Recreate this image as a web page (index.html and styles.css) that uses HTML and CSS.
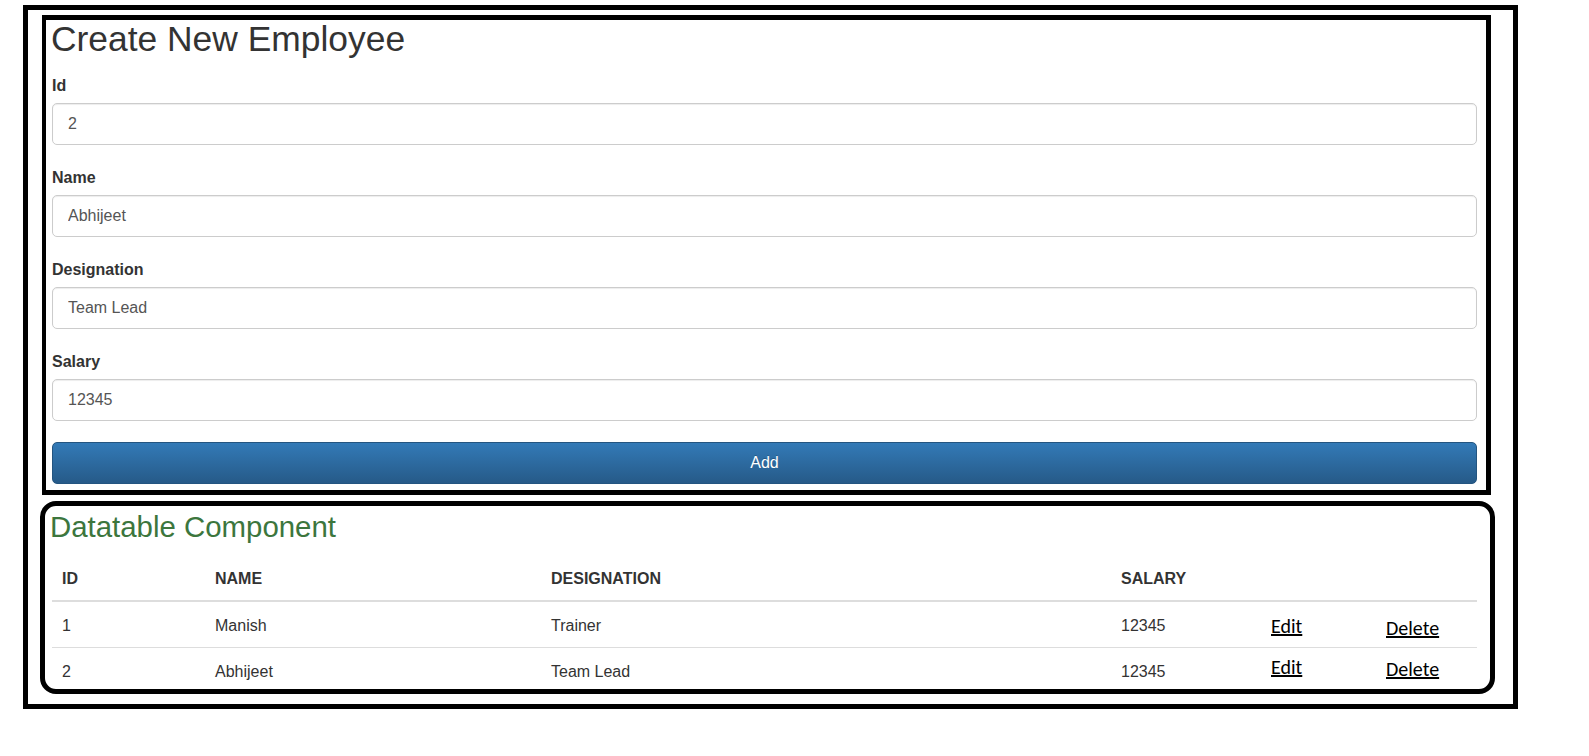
FILE: index.html
```html
<!DOCTYPE html>
<html lang="en">
<head>
<meta charset="utf-8">
<title>Create New Employee</title>
<link rel="stylesheet" href="styles.css">
</head>
<body>
<div class="frame">
  <div class="form-box">
    <h1 class="title">Create New Employee</h1>
    <div class="group first">
      <label class="label">Id</label>
      <input class="field" type="text" value="2">
    </div>
    <div class="group">
      <label class="label">Name</label>
      <input class="field" type="text" value="Abhijeet">
    </div>
    <div class="group">
      <label class="label">Designation</label>
      <input class="field" type="text" value="Team Lead">
    </div>
    <div class="group">
      <label class="label">Salary</label>
      <input class="field" type="text" value="12345">
    </div>
    <button class="btn" type="button">Add</button>
  </div>
  <div class="table-box">
    <h2 class="subtitle">Datatable Component</h2>
    <table class="grid">
      <colgroup>
        <col class="c-id"><col class="c-name"><col class="c-desig"><col class="c-sal"><col class="c-edit"><col class="c-del">
      </colgroup>
      <thead>
        <tr><th>ID</th><th>NAME</th><th>DESIGNATION</th><th>SALARY</th><th></th><th></th></tr>
      </thead>
      <tbody>
        <tr class="row-a">
          <td>1</td><td>Manish</td><td>Trainer</td><td>12345</td>
          <td><a class="act act-edit" href="#">Edit</a></td>
          <td><a class="act act-del" href="#">Delete</a></td>
        </tr>
        <tr class="row-b">
          <td>2</td><td>Abhijeet</td><td>Team Lead</td><td>12345</td>
          <td><a class="act act-edit" href="#">Edit</a></td>
          <td><a class="act act-del" href="#">Delete</a></td>
        </tr>
      </tbody>
    </table>
  </div>
</div>
</body>
</html>
```

FILE: styles.css
```css
* { box-sizing: border-box; }
html, body { margin: 0; padding: 0; background: #fff; }
body {
  font-family: "Liberation Sans", Arial, Helvetica, sans-serif;
  font-size: 16px;
  color: #333;
}
.frame {
  width: 1495px;
  margin: 5px 0 0 23px;
  border: 5px solid #000;
  overflow: hidden;
}
.form-box {
  margin: 5px 22px 0 14px;
  border-style: solid;
  border-color: #000;
  border-width: 5px 5px 5px 4px;
  padding: 0 9px 6px 6px;
}
.title {
  margin: -1px 0 0 -1px;
  font-size: 35.4px;
  line-height: 40px;
  font-weight: 400;
  color: #333;
}
.group { margin-top: 23px; }
.group.first { margin-top: 17px; }
.label {
  display: block;
  font-weight: 700;
  font-size: 16px;
  line-height: 20px;
  margin-bottom: 7px;
  color: #333;
}
.field {
  display: block;
  width: 100%;
  height: 42px;
  padding: 0 15px;
  border: 1px solid #ccc;
  border-radius: 5px;
  box-shadow: inset 0 1px 1px rgba(0,0,0,.075);
  font-family: "Liberation Sans", Arial, sans-serif;
  font-size: 16px;
  color: #555;
  background: #fff;
}
.btn {
  display: block;
  width: 100%;
  height: 42px;
  margin-top: 21px;
  border: 1px solid #245580;
  border-radius: 5px;
  background: linear-gradient(to bottom, #337ab7 0%, #265a88 100%);
  color: #fff;
  font-family: "Liberation Sans", Arial, sans-serif;
  font-size: 16px;
  text-shadow: 0 -1px 0 rgba(0,0,0,.2);
}
.table-box {
  margin: 6px 18px 10px 12px;
  border: 5px solid #000;
  border-radius: 16px;
  padding: 0 13px 0 7px;
}
.subtitle {
  margin: 5px 0 0 -2px;
  font-size: 29.4px;
  line-height: 32px;
  font-weight: 400;
  color: #3c763d;
}
.grid {
  width: 100%;
  margin-top: 13px;
  border-collapse: collapse;
  table-layout: fixed;
}
.c-id { width: 153px; }
.c-name { width: 336px; }
.c-desig { width: 570px; }
.c-sal { width: 150px; }
.c-edit { width: 115px; }
.c-del { width: 101px; }
.grid th, .grid td {
  text-align: left;
  line-height: 22px;
  font-size: 16px;
  color: #333;
  padding: 13px 10px 10px;
  white-space: nowrap;
}
.grid th {
  font-weight: 700;
  padding-top: 12px;
  border-bottom: 2px solid #ddd;
}
.row-a td { border-bottom: 1px solid #ddd; }
.row-b td { padding-bottom: 6px; }
.act {
  font-family: Carlito, Calibri, Lato, sans-serif;
  font-size: 20px;
  line-height: 12px;
  color: #000;
  text-decoration: underline;
}
.row-a .act-edit { vertical-align: -2px; }
.row-a .act-del { vertical-align: -4px; }
.row-b .act-edit { vertical-align: 3px; }
.row-b .act-del { vertical-align: 1px; }
```
